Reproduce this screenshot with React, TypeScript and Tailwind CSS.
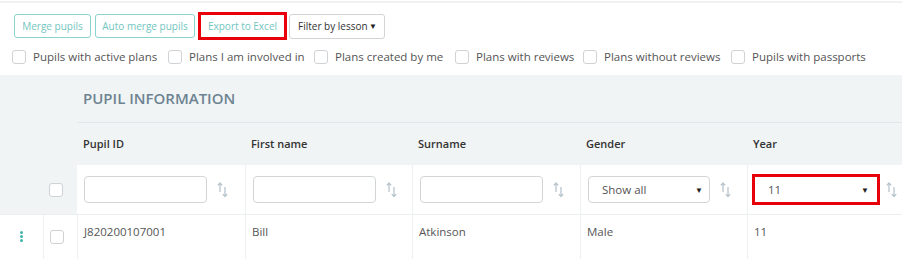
import React from 'react'

const filters = [
  { label: 'Pupils with active plans', w: 'w-[156px]' },
  { label: 'Plans I am involved in', w: 'w-[146px]' },
  { label: 'Plans created by me', w: 'w-[141px]' },
  { label: 'Plans with reviews', w: 'w-[128px]' },
  { label: 'Plans without reviews', w: 'w-[148px]' },
  { label: 'Pupils with passports', w: 'w-[150px]' },
]

const columns = ['Pupil ID', 'First name', 'Surname', 'Gender', 'Year']

const Box = () => (
  <span className="block h-[14px] w-[14px] shrink-0 rounded-[3px] border border-[#cfd3d6] bg-white" />
)

const SortIcon = () => (
  <svg width="11" height="16" viewBox="0 0 11 16" fill="none" stroke="#b9c5cd" strokeWidth="1.3">
    <path d="M3 10V1M0.8 3.4L3 1l2.2 2.4" />
    <path d="M8 5v9.5M5.8 12.1L8 14.5l2.2-2.4" />
  </svg>
)

const Caret = () => <span className="text-[8px] leading-none text-[#222]">▼</span>

const App = () => {
  return (
    <div className="h-[260px] w-[902px] overflow-hidden bg-white font-['Open_Sans',sans-serif] text-[#555]">
      <div className="mt-px h-[2px] bg-[#f0f1f2]" />

      <div className="flex items-center pl-[14px] pt-[9px]">
        <button className="h-[24px] w-[77px] rounded-[3px] border border-[#8ad4cf] text-[10px] text-[#72c6c0]">
          Merge pupils
        </button>
        <button className="ml-[4px] h-[24px] w-[100px] rounded-[3px] border border-[#8ad4cf] text-[10px] text-[#72c6c0]">
          Auto merge pupils
        </button>
        <button className="ml-[3px] h-[28px] w-[89px] border-[3px] border-[#e8000b] text-[10px] text-[#72c6c0]">
          Export to Excel
        </button>
        <div className="ml-[2px] flex h-[25px] w-[96px] items-center justify-between rounded-[3px] border border-[#d4d4d4] pl-[8px] pr-[7px] text-[10px] text-[#333]">
          <span className="whitespace-nowrap">Filter by lesson</span>
          <Caret />
        </div>
      </div>

      <div className="mt-[7px] flex h-[20px] items-center pl-[12px] text-[11.5px]">
        {filters.map((f) => (
          <div key={f.label} className={`flex shrink-0 items-center gap-[7px] ${f.w}`}>
            <Box />
            <span className="whitespace-nowrap">{f.label}</span>
          </div>
        ))}
      </div>

      <div className="mt-[8px] grid grid-cols-[43px_34px_168px_167px_168px_167px_1fr] bg-[#f1f4f5]">
        <div className="col-span-2" />
        <div className="col-span-5 flex h-[48px] items-center border-b border-[#e2e7e9] pl-[6px] text-[15px] font-semibold text-[#6d8391]">
          PUPIL INFORMATION
        </div>

        <div className="col-span-2" />
        {columns.map((c) => (
          <div key={c} className="flex h-[42px] items-center pl-[6px] text-[11px] font-semibold text-[#333]">
            {c}
          </div>
        ))}

        <div />
        <div className="flex h-[49px] items-center pl-[6px]">
          <Box />
        </div>
        {['Pupil ID', 'First name', 'Surname'].map((c, i) => (
          <div key={c} className={`flex items-center bg-white pl-[7px] ${i > 0 ? 'border-l border-[#eef1f2]' : ''}`}>
            <div className="h-[27px] w-[123px] rounded-[4px] border border-[#d2d5d7] bg-white" />
            <span className="ml-[10px]">
              <SortIcon />
            </span>
          </div>
        ))}
        <div className="flex items-center border-l border-[#eef1f2] bg-white pl-[7px]">
          <div className="flex h-[27px] w-[122px] items-center justify-between rounded-[4px] border border-[#d2d5d7] pl-[13px] pr-[6px] text-[11.5px]">
            <span>Show all</span>
            <Caret />
          </div>
          <span className="ml-[10px]">
            <SortIcon />
          </span>
        </div>
        <div className="flex items-center border-l border-[#eef1f2] bg-white pl-[4px]">
          <div className="flex h-[31px] w-[128px] items-center justify-between border-[3px] border-[#e8000b] pl-[13px] pr-[8px] text-[11.5px]">
            <span>11</span>
            <Caret />
          </div>
          <span className="ml-[6px]">
            <SortIcon />
          </span>
        </div>
      </div>

      <div className="grid h-[45px] grid-cols-[43px_34px_168px_167px_168px_167px_1fr] border-t border-[#eceff0] bg-white text-[11.5px]">
        <div className="flex justify-center pt-[16px]">
          <span className="flex flex-col gap-[1px]">
            <span className="h-[3px] w-[3px] rounded-full bg-[#3fb5ad]" />
            <span className="h-[3px] w-[3px] rounded-full bg-[#3fb5ad]" />
            <span className="h-[3px] w-[3px] rounded-full bg-[#3fb5ad]" />
          </span>
        </div>
        <div className="border-l border-[#eef1f2] pl-[6px] pt-[15px]">
          <Box />
        </div>
        {['J820200107001', 'Bill', 'Atkinson', 'Male', '11'].map((v) => (
          <div key={v} className="border-l border-[#eef1f2] pl-[6px] pt-[8px]">
            {v}
          </div>
        ))}
      </div>
    </div>
  )
}

export default App
